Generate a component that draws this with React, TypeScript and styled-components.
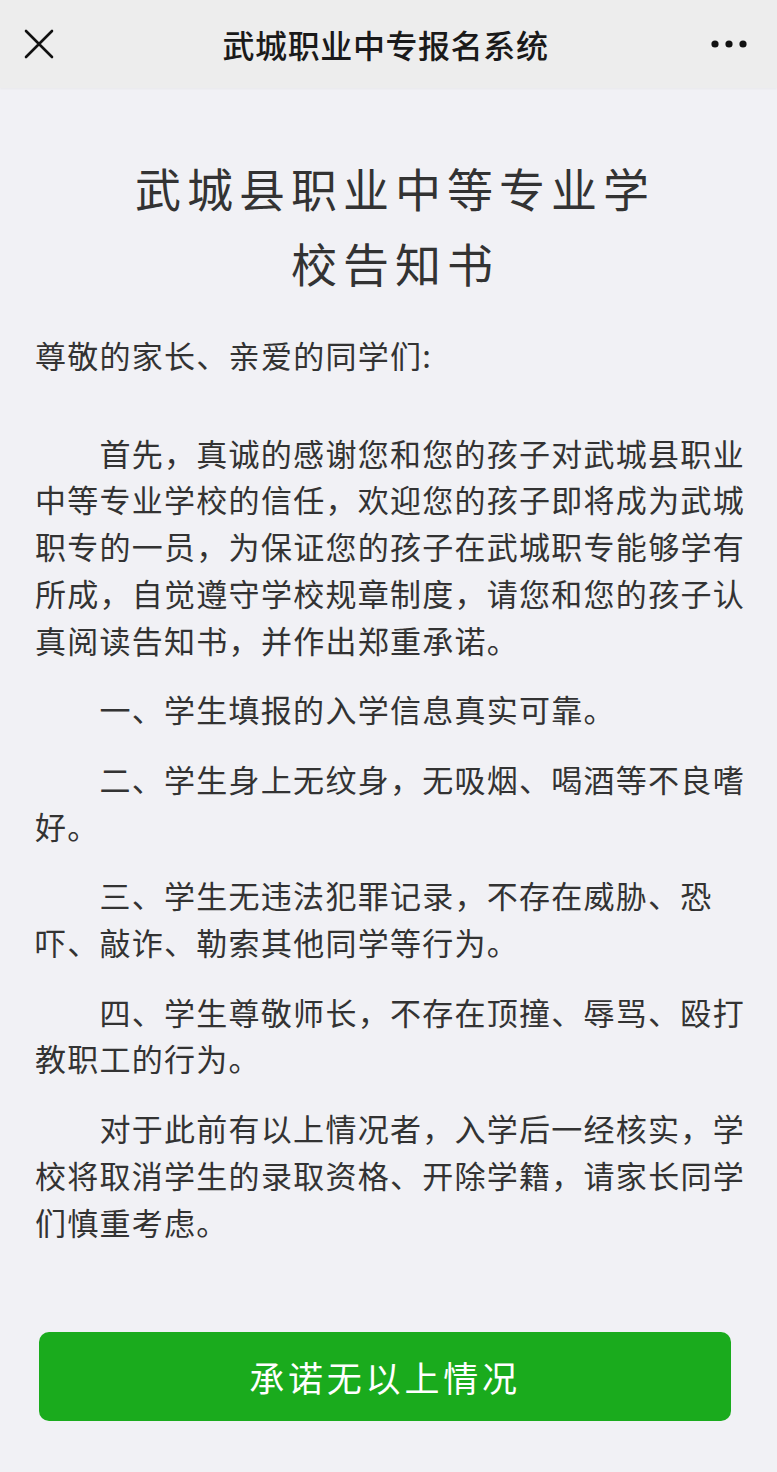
import React from "react";
import styled, { createGlobalStyle } from "styled-components";

const GlobalStyle = createGlobalStyle`
  html, body {
    margin: 0;
    padding: 0;
    background: #f1f1f5;
  }
  body {
    font-family: "Noto Sans CJK SC", "Noto Sans", sans-serif;
    color: #333333;
  }
`;

const Page = styled.div`
  min-height: 1472px;
  background: #f1f1f5;
  display: flex;
  flex-direction: column;
`;

const NavBar = styled.header`
  height: 88px;
  flex-shrink: 0;
  background: #ededed;
  display: flex;
  align-items: center;
  justify-content: space-between;
  padding: 0 30px 0 24px;
  box-shadow: 0 1px 2px rgba(0, 0, 0, 0.04);
`;

const NavIcon = styled.button<{ $align?: string }>`
  width: 40px;
  height: 40px;
  border: 0;
  padding: 0;
  background: none;
  display: flex;
  align-items: center;
  justify-content: ${(p) => p.$align || "center"};
`;

const NavTitle = styled.h1`
  margin: 0;
  font-size: 32px;
  font-weight: 500;
  letter-spacing: 0.6px;
  color: #1a1a1a;
`;

const Article = styled.main`
  padding: 62px 22px 0 35px;
`;

const Title = styled.h2`
  margin: 0;
  padding: 0 80px;
  text-align: center;
  font-size: 46px;
  line-height: 75px;
  font-weight: 400;
  letter-spacing: 6px;
  color: #333333;
`;

const Para = styled.p<{ $indent?: boolean; $gap?: number }>`
  margin: ${(p) => p.$gap ?? 23}px 0 0;
  font-size: 31px;
  line-height: 46.7px;
  letter-spacing: 1.27px;
  color: #333333;
  text-indent: ${(p) => (p.$indent ? "64.5px" : "0")};
  line-break: strict;
`;

const Footer = styled.div`
  padding: 87px 46px 0 39px;
`;

const ConfirmButton = styled.button`
  width: 100%;
  height: 89px;
  border: 0;
  border-radius: 10px;
  background: #1aab1d;
  color: #ffffff;
  font-family: "Noto Sans CJK SC", "Noto Sans", sans-serif;
  font-size: 35px;
  letter-spacing: 3.8px;
  cursor: pointer;
`;

const paragraphs = [
  "首先，真诚的感谢您和您的孩子对武城县职业中等专业学校的信任，欢迎您的孩子即将成为武城职专的一员，为保证您的孩子在武城职专能够学有所成，自觉遵守学校规章制度，请您和您的孩子认真阅读告知书，并作出郑重承诺。",
  "一、学生填报的入学信息真实可靠。",
  "二、学生身上无纹身，无吸烟、喝酒等不良嗜好。",
  "三、学生无违法犯罪记录，不存在威胁、恐吓、敲诈、勒索其他同学等行为。",
  "四、学生尊敬师长，不存在顶撞、辱骂、殴打教职工的行为。",
  "对于此前有以上情况者，入学后一经核实，学校将取消学生的录取资格、开除学籍，请家长同学们慎重考虑。",
];

export default function App() {
  return (
    <Page>
      <GlobalStyle />
      <NavBar>
        <NavIcon $align="flex-start" aria-label="关闭">
          <svg width="30" height="30" viewBox="0 0 30 30">
            <path d="M2 2 L28 28 M28 2 L2 28" stroke="#111" strokeWidth="2.6" strokeLinecap="round" />
          </svg>
        </NavIcon>
        <NavTitle>武城职业中专报名系统</NavTitle>
        <NavIcon $align="flex-end" aria-label="更多">
          <svg width="36" height="10" viewBox="0 0 36 10">
            <circle cx="4" cy="5" r="3.6" fill="#111" />
            <circle cx="18" cy="5" r="3.6" fill="#111" />
            <circle cx="32" cy="5" r="3.6" fill="#111" />
          </svg>
        </NavIcon>
      </NavBar>
      <Article>
        <Title>武城县职业中等专业学校告知书</Title>
        <Para $gap={32}>尊敬的家长、亲爱的同学们:</Para>
        {paragraphs.map((t, i) => (
          <Para key={i} $indent $gap={i === 0 ? 51 : 23}>
            {t}
          </Para>
        ))}
      </Article>
      <Footer>
        <ConfirmButton>承诺无以上情况</ConfirmButton>
      </Footer>
    </Page>
  );
}
